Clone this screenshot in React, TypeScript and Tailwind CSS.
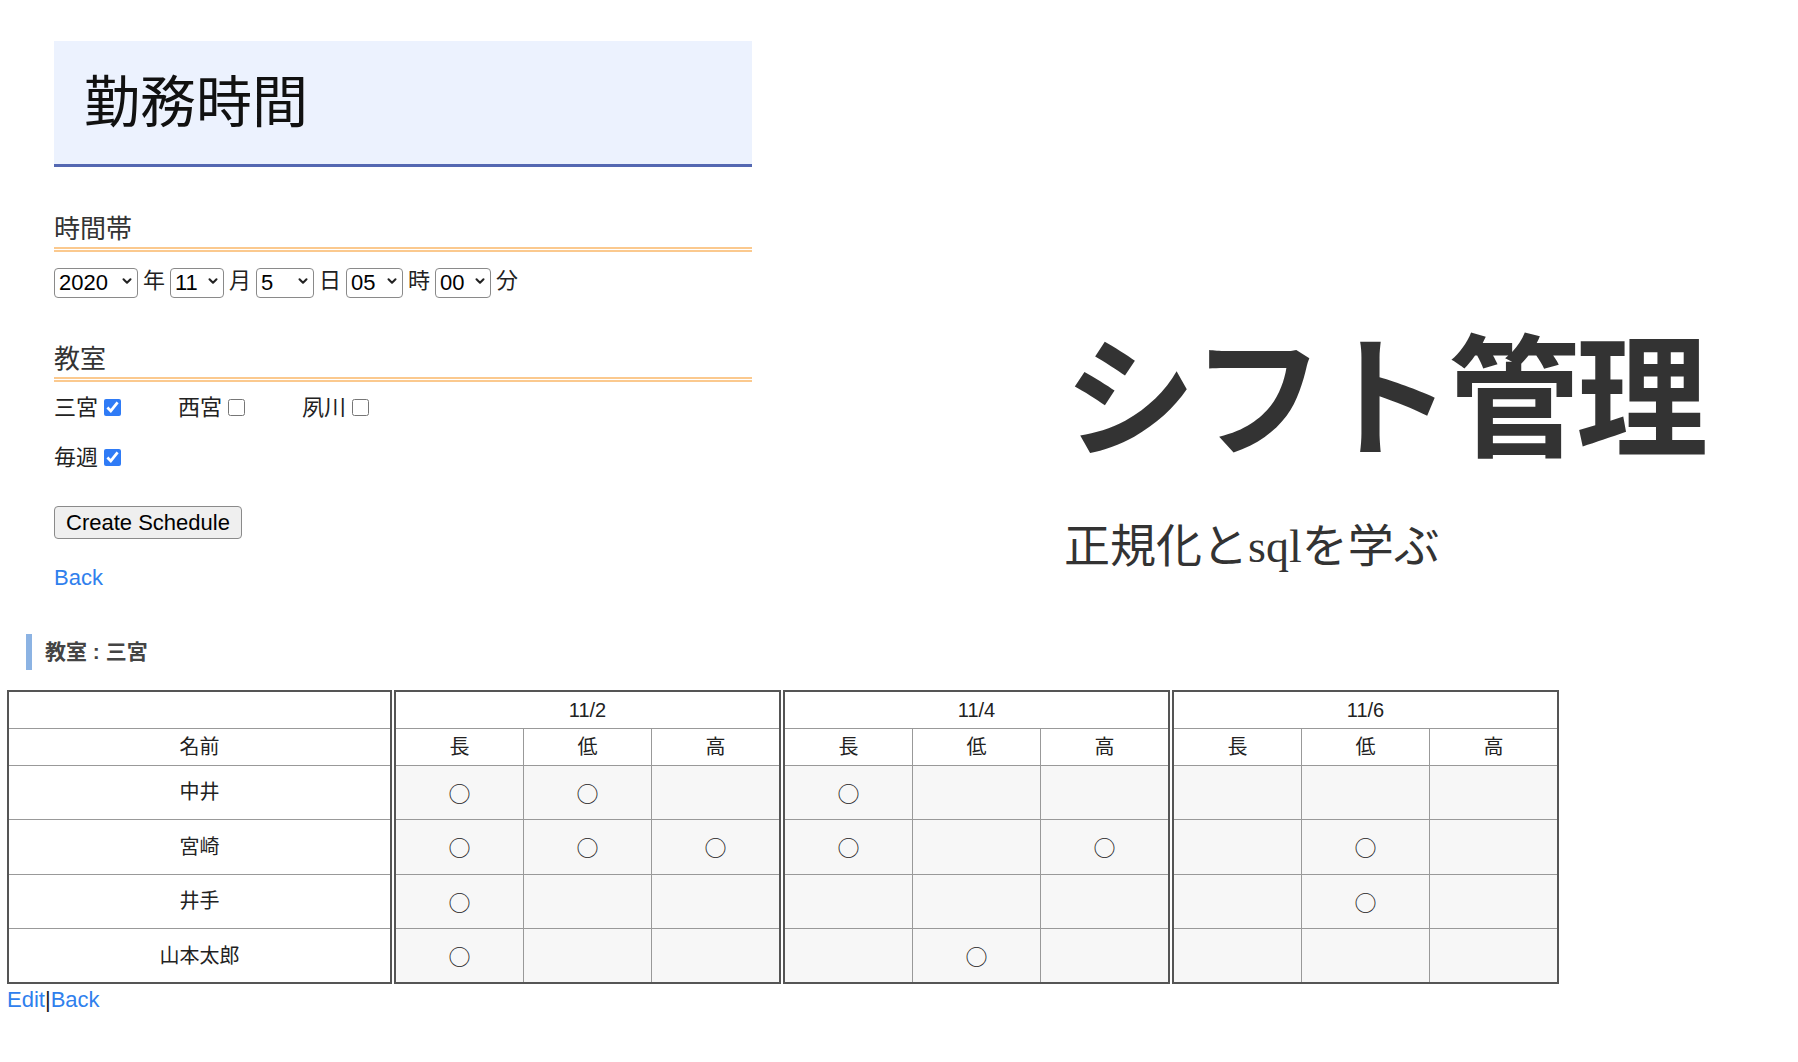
import { ChevronDown } from "lucide-react";

const sans = "font-['Liberation_Sans','Noto_Sans_CJK_JP',sans-serif]";

const dates = ["11/2", "11/4", "11/6"];
const kinds = ["長", "低", "高"];

// marks[name][dateIndex] = kind indexes that have a ○
const people: { name: string; marks: number[][] }[] = [
  { name: "中井", marks: [[0, 1], [0], []] },
  { name: "宮崎", marks: [[0, 1, 2], [0, 2], [1]] },
  { name: "井手", marks: [[0], [], [1]] },
  { name: "山本太郎", marks: [[0], [1], []] },
];

function Select({ value, width }: { value: string; width: string }) {
  return (
    <div className={`relative h-[30px] ${width}`}>
      <select
        defaultValue={value}
        className="appearance-none w-full h-full border border-[#8a8a8a] rounded-[4px] bg-white pl-[4px] text-[22px] leading-none text-black"
      >
        <option>{value}</option>
      </select>
      <ChevronDown
        size={14}
        strokeWidth={3.5}
        className="absolute right-[4px] top-[8px] pointer-events-none text-[#222]"
      />
    </div>
  );
}

function Check({ label, checked }: { label: string; checked: boolean }) {
  return (
    <label className="flex items-center mr-[57px]">
      <span>{label}</span>
      <input
        type="checkbox"
        defaultChecked={checked}
        className="ml-[6px] w-[17px] h-[17px] accent-[#2f7bf6]"
      />
    </label>
  );
}

function SectionTitle({ children, className }: { children: string; className: string }) {
  return (
    <h3
      className={`h-[41px] leading-[36px] text-[26px] text-[#333] border-b-[5px] border-double border-[#fbc98e] ${className}`}
    >
      {children}
    </h3>
  );
}

export default function App() {
  return (
    <div className={`${sans} bg-white text-[#111] w-[1798px] min-h-[1062px]`}>
      <div className="flex">
        {/* left column: form */}
        <div className="pt-[41px] pl-[54px] w-[752px] shrink-0">
          <div className="h-[126px] bg-[#ecf2fe] border-b-[3px] border-[#5468b2] flex items-center pl-[30px]">
            <h1 className="text-[56px] leading-none text-[#111]">勤務時間</h1>
          </div>

          <SectionTitle className="mt-[44px]">時間帯</SectionTitle>
          <div className="mt-[12px] flex items-center text-[22px] text-[#222]">
            <Select value="2020" width="w-[84px]" />
            <span className="mx-[5px]">年</span>
            <Select value="11" width="w-[54px]" />
            <span className="mx-[5px]">月</span>
            <Select value="5" width="w-[58px]" />
            <span className="mx-[5px]">日</span>
            <Select value="05" width="w-[57px]" />
            <span className="mx-[5px]">時</span>
            <Select value="00" width="w-[56px]" />
            <span className="mx-[5px]">分</span>
          </div>

          <SectionTitle className="mt-[44px]">教室</SectionTitle>
          <div className="mt-[10px] h-[30px] flex items-center text-[22px] text-[#222]">
            <Check label="三宮" checked />
            <Check label="西宮" checked={false} />
            <Check label="夙川" checked={false} />
          </div>
          <div className="mt-[20px] h-[30px] flex items-center text-[22px] text-[#222]">
            <Check label="毎週" checked />
          </div>

          <button className="mt-[34px] h-[33px] px-[11px] bg-[#efefef] border border-[#8a8a8a] rounded-[4px] text-[22px] leading-none text-black">
            Create Schedule
          </button>
          <div className="mt-[24px] h-[30px] leading-[30px] text-[22px]">
            <a href="#" className="text-[#2f80ed]">
              Back
            </a>
          </div>
        </div>

        {/* right column: title */}
        <div className="pl-[312px] pt-[335px] text-[#333]">
          <div className="text-[132px] leading-none font-bold tracking-[-4px] whitespace-nowrap">
            シフト管理
          </div>
          <div className="mt-[57px] text-[46px] leading-none font-['Liberation_Serif','Noto_Sans_CJK_JP',serif] whitespace-nowrap">
            正規化とsqlを学ぶ
          </div>
        </div>
      </div>

      {/* schedule */}
      <div className="mt-[41px] ml-[26px] h-[36px] border-l-[6px] border-[#8cb3e3] pl-[13px] flex items-center text-[21px] font-bold text-[#444]">
        教室 : 三宮
      </div>

      <div className="mt-[20px] ml-[7px] flex gap-[2px] text-[20px] text-[#222]">
        <table className="w-[385px] table-fixed border-collapse border-2 border-[#555]">
          <thead>
            <tr className="h-[37px]">
              <th className="border border-[#999] font-normal"></th>
            </tr>
            <tr className="h-[37px]">
              <th className="border border-[#999] font-normal">名前</th>
            </tr>
          </thead>
          <tbody>
            {people.map((p) => (
              <tr key={p.name} className="h-[54.5px]">
                <td className="border border-[#999] text-center bg-white">{p.name}</td>
              </tr>
            ))}
          </tbody>
        </table>

        {dates.map((d, di) => (
          <table key={d} className="w-[387px] table-fixed border-collapse border-2 border-[#555]">
            <thead>
              <tr className="h-[37px]">
                <th colSpan={3} className="border border-[#999] font-normal">
                  {d}
                </th>
              </tr>
              <tr className="h-[37px]">
                {kinds.map((k) => (
                  <th key={k} className="border border-[#999] font-normal">
                    {k}
                  </th>
                ))}
              </tr>
            </thead>
            <tbody>
              {people.map((p) => (
                <tr key={p.name} className="h-[54.5px]">
                  {kinds.map((k, ki) => (
                    <td
                      key={k}
                      className="border border-[#999] text-center bg-[#f7f7f7] text-[22px] font-['Noto_Sans_CJK_JP',sans-serif]"
                    >
                      {p.marks[di].includes(ki) ? "○" : ""}
                    </td>
                  ))}
                </tr>
              ))}
            </tbody>
          </table>
        ))}
      </div>

      <div className="ml-[7px] h-[32px] leading-[32px] text-[22px]">
        <a href="#" className="text-[#2f80ed]">
          Edit
        </a>
        <span className="text-[#222]">|</span>
        <a href="#" className="text-[#2f80ed]">
          Back
        </a>
      </div>
    </div>
  );
}
